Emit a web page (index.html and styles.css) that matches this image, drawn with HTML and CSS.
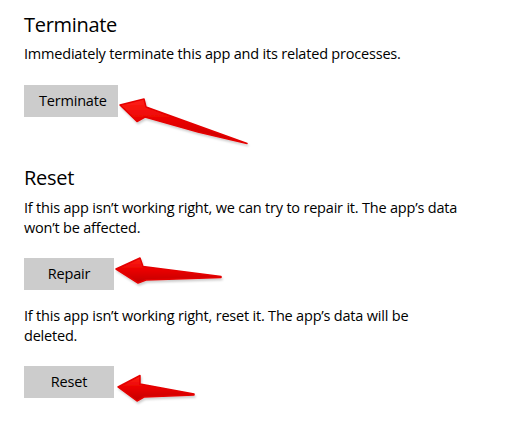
FILE: index.html
```html
<!DOCTYPE html>
<html lang="en">
<head>
<meta charset="utf-8">
<title>App settings</title>
<link rel="stylesheet" href="styles.css">
</head>
<body>
<main class="page">
  <section class="section">
    <h2 class="title">Terminate</h2>
    <p class="desc">Immediately terminate this app and its related processes.</p>
    <button class="btn btn-terminate">Terminate</button>
  </section>
  <section class="section section-reset">
    <h2 class="title">Reset</h2>
    <p class="desc">If this app isn’t working right, we can try to repair it. The app’s data<br>won’t be affected.</p>
    <button class="btn">Repair</button>
    <p class="desc desc-second">If this app isn’t working right, reset it. The app’s data will be<br>deleted.</p>
    <button class="btn">Reset</button>
  </section>
</main>
<svg class="arrows" width="513" height="423" viewBox="0 0 513 423" aria-hidden="true">
  <defs>
    <linearGradient id="red" x1="0" y1="0" x2="0" y2="1">
      <stop offset="0" stop-color="#ff2318"/>
      <stop offset="0.5" stop-color="#e80000"/>
      <stop offset="1" stop-color="#c20000"/>
    </linearGradient>
    <filter id="sh" x="-10%" y="-30%" width="120%" height="160%">
      <feDropShadow dx="1" dy="2" stdDeviation="1.3" flood-color="#000" flood-opacity="0.2"/>
    </filter>
  </defs>
  <g fill="url(#red)" stroke="#e40000" stroke-width="1.5" stroke-linejoin="round" filter="url(#sh)">
    <path d="M120 105 L144 99 L146 107 L247 143.5 L198 132 L145 117 L137 121.5 Z"/>
    <path d="M116 269 L140 258 L143 266.5 L221 276.5 L221 277.5 L146 280 L138 283 Z"/>
    <path d="M118 387 L140 375.5 L140 384 L194 394 L194 395 L144 397 L137 401 Z"/>
  </g>
</svg>
</body>
</html>
```
FILE: styles.css
```css
html, body {
  margin: 0;
  padding: 0;
  background: #ffffff;
}

body {
  position: relative;
  width: 513px;
  height: 423px;
  overflow: hidden;
  font-family: "Open Sans", "Noto Sans", "Liberation Sans", sans-serif;
  color: #000000;
}

.page {
  display: flex;
  flex-direction: column;
  padding: 11px 0 0 24px;
}

.section {
  display: flex;
  flex-direction: column;
  align-items: flex-start;
}

.section-reset {
  margin-top: 47px;
}

.title {
  margin: 0;
  font-size: 20px;
  font-weight: 400;
  line-height: 28px;
  letter-spacing: -0.3px;
}

.desc {
  margin: 5px 0 0;
  font-size: 14.5px;
  line-height: 20px;
  letter-spacing: -0.2px;
}

.section-reset .title + .desc {
  margin-top: 6px;
}

.desc-second {
  margin-top: 16px;
}

.btn {
  margin-top: 20px;
  min-width: 90px;
  height: 32px;
  padding: 0 15px;
  box-sizing: border-box;
  border: none;
  background: #cccccc;
  color: #000000;
  font-family: inherit;
  font-size: 14.5px;
  letter-spacing: -0.2px;
  line-height: 32px;
}

.btn-terminate {
  margin-top: 21px;
  width: 94px;
}

.arrows {
  position: absolute;
  top: 0;
  left: 0;
  pointer-events: none;
}
```
